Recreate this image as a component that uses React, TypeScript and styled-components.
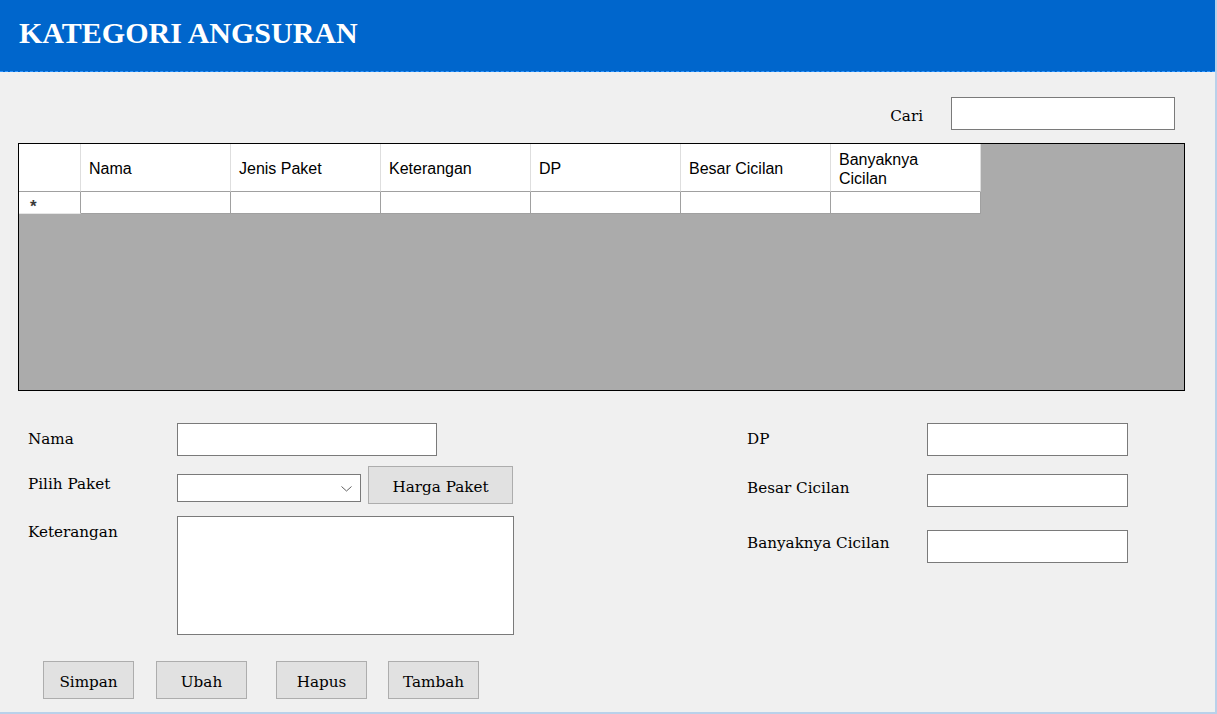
import React from "react";
import styled, { createGlobalStyle } from "styled-components";

const GlobalStyle = createGlobalStyle`
  html, body { margin: 0; padding: 0; background: #f0f0f0; }
  body { font-family: "DejaVu Serif", serif; }
  #root { width: 1217px; height: 714px; }
`;

const Window = styled.div`
  width: 1217px;
  height: 714px;
  box-sizing: border-box;
  background: #f0f0f0;
  border-right: 2px solid #b9d1ea;
  border-bottom: 2px solid #b9d1ea;
  display: flex;
  flex-direction: column;
  overflow: hidden;
`;

const Header = styled.header`
  height: 72px;
  box-sizing: border-box;
  background: #0066cc;
  border-bottom: 1px dashed #2f95ff;
  padding: 16px 0 0 19px;
`;

const Title = styled.h1`
  margin: 0;
  font-family: "Liberation Serif", serif;
  font-weight: 700;
  font-size: 30px;
  line-height: 34px;
  color: #ffffff;
`;

const SearchBar = styled.div`
  display: flex;
  justify-content: flex-end;
  align-items: flex-start;
  gap: 28px;
  padding: 25px 40px 0 0;
`;

const Label = styled.label<{ $w?: number; $pt: number }>`
  ${(p) => (p.$w ? `width: ${p.$w}px; flex: none;` : "")}
  padding-top: ${(p) => p.$pt}px;
  font-family: "DejaVu Serif", serif;
  font-size: 15.2px;
  line-height: 18px;
  color: #000;
  white-space: nowrap;
`;

const TextBox = styled.input<{ $w: number }>`
  width: ${(p) => p.$w}px;
  height: 33px;
  box-sizing: border-box;
  margin: 0;
  padding: 0 4px;
  border: 1px solid #7a7a7a;
  background: #ffffff;
  outline: none;
  font-family: "DejaVu Serif", serif;
  font-size: 15px;
`;

const TextArea = styled.textarea<{ $w: number; $h: number }>`
  width: ${(p) => p.$w}px;
  height: ${(p) => p.$h}px;
  box-sizing: border-box;
  margin: 0;
  padding: 2px 4px;
  border: 1px solid #7a7a7a;
  background: #ffffff;
  resize: none;
  outline: none;
  font-family: "DejaVu Serif", serif;
  font-size: 15px;
`;

const GridFrame = styled.div`
  margin: 13px 30px 0 18px;
  height: 248px;
  box-sizing: border-box;
  border: 1px solid #000;
  background: #ababab;
  display: grid;
  grid-template-columns: 62px repeat(6, 150px);
  grid-template-rows: 48px 22px;
  align-content: start;
`;

const HeadCell = styled.div`
  box-sizing: border-box;
  background: #ffffff;
  border-right: 1px solid #dedede;
  border-bottom: 1px solid #a0a0a0;
  display: flex;
  align-items: center;
  padding: 2px 0 0 8px;
  font-family: "Liberation Sans", Arial, sans-serif;
  font-size: 16px;
  line-height: 19px;
  color: #000;
  white-space: pre-line;
`;

const RowHeadCell = styled.div`
  box-sizing: border-box;
  background: #ffffff;
  border-right: 1px solid #a0a0a0;
  border-bottom: 1px solid #e6e6e6;
  padding: 7px 0 0 11px;
  font-family: "Liberation Sans", Arial, sans-serif;
  font-weight: 700;
  font-size: 17px;
  line-height: 15px;
  color: #3a3a3a;
`;

const DataCell = styled.div`
  box-sizing: border-box;
  background: #ffffff;
  border-right: 1px solid #a0a0a0;
  border-bottom: 1px solid #a0a0a0;
`;

const Form = styled.div`
  display: grid;
  grid-template-columns: 719px 1fr;
  padding: 32px 0 0 28px;
`;

const Column = styled.div`
  display: flex;
  flex-direction: column;
`;

const Row = styled.div<{ $mt: number }>`
  display: flex;
  align-items: flex-start;
  margin-top: ${(p) => p.$mt}px;
`;

const ComboBox = styled.div<{ $w: number; $mt: number }>`
  width: ${(p) => p.$w}px;
  height: 28px;
  margin-top: ${(p) => p.$mt}px;
  box-sizing: border-box;
  border: 1px solid #7a7a7a;
  background: #ffffff;
  display: flex;
  justify-content: flex-end;
  align-items: center;
  padding: 2px 8px 0 0;
`;

const Button = styled.button<{ $w: number; $ml: number }>`
  width: ${(p) => p.$w}px;
  height: 38px;
  margin: 0 0 0 ${(p) => p.$ml}px;
  box-sizing: border-box;
  border: 1px solid #adadad;
  background: #e1e1e1;
  padding: 3px 0 0;
  font-family: "DejaVu Serif", serif;
  font-size: 15.2px;
  color: #000;
  cursor: pointer;
`;

const ButtonBar = styled.div`
  display: flex;
  margin: 26px 0 0 15px;
`;

const Chevron = () => (
  <svg width="11" height="6" viewBox="0 0 11 6">
    <path d="M0.5 0.5 L5.5 5 L10.5 0.5" fill="none" stroke="#606060" strokeWidth="1" />
  </svg>
);

const columns = ["Nama", "Jenis Paket", "Keterangan", "DP", "Besar Cicilan", "Banyaknya\nCicilan"];

export default function App() {
  return (
    <>
      <GlobalStyle />
      <Window>
        <Header>
          <Title>KATEGORI ANGSURAN</Title>
        </Header>

        <SearchBar>
          <Label $pt={10}>Cari</Label>
          <TextBox $w={224} />
        </SearchBar>

        <GridFrame>
          <HeadCell />
          {columns.map((c) => (
            <HeadCell key={c}>{c}</HeadCell>
          ))}
          <RowHeadCell>*</RowHeadCell>
          {columns.map((c) => (
            <DataCell key={c} />
          ))}
        </GridFrame>

        <Form>
          <Column>
            <Row $mt={0}>
              <Label $w={149} $pt={7}>Nama</Label>
              <TextBox $w={260} />
            </Row>
            <Row $mt={10}>
              <Label $w={149} $pt={9}>Pilih Paket</Label>
              <ComboBox $w={184} $mt={8}>
                <Chevron />
              </ComboBox>
              <Button $w={145} $ml={7}>Harga Paket</Button>
            </Row>
            <Row $mt={12}>
              <Label $w={149} $pt={7}>Keterangan</Label>
              <TextArea $w={337} $h={119} />
            </Row>
            <ButtonBar>
              <Button $w={91} $ml={0}>Simpan</Button>
              <Button $w={91} $ml={22}>Ubah</Button>
              <Button $w={91} $ml={29}>Hapus</Button>
              <Button $w={91} $ml={21}>Tambah</Button>
            </ButtonBar>
          </Column>

          <Column>
            <Row $mt={0}>
              <Label $w={180} $pt={7}>DP</Label>
              <TextBox $w={201} />
            </Row>
            <Row $mt={18}>
              <Label $w={180} $pt={5}>Besar Cicilan</Label>
              <TextBox $w={201} />
            </Row>
            <Row $mt={23}>
              <Label $w={180} $pt={4}>Banyaknya Cicilan</Label>
              <TextBox $w={201} />
            </Row>
          </Column>
        </Form>
      </Window>
    </>
  );
}
